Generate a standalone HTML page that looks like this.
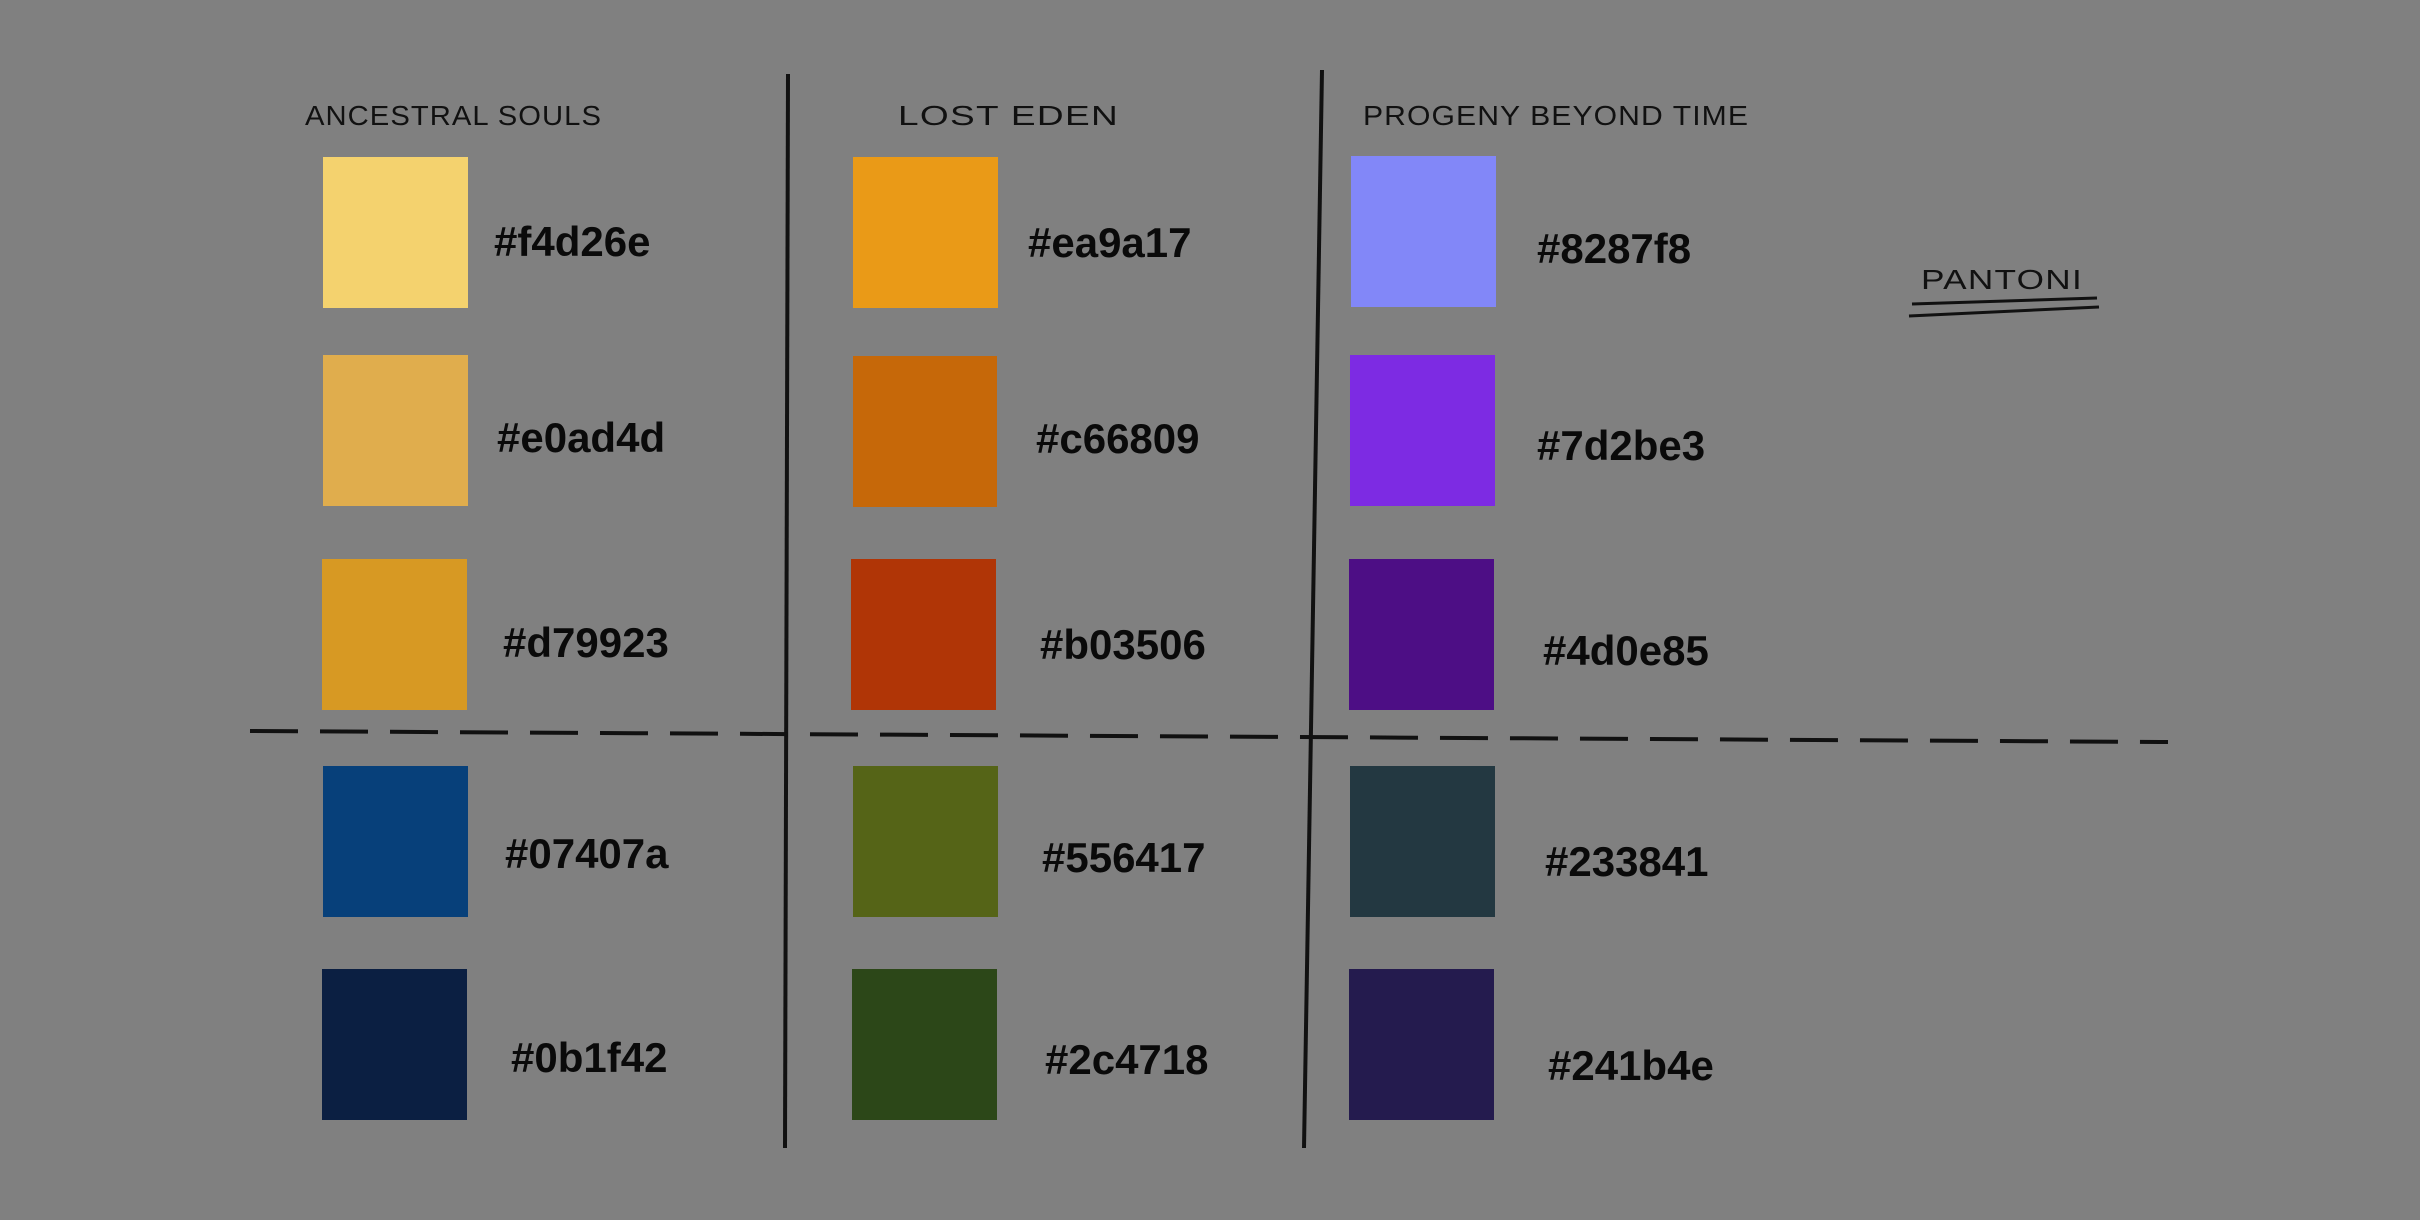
<!DOCTYPE html>
<html><head><meta charset="utf-8"><style>
html,body{margin:0;padding:0;background:#808080;}
svg{display:block}
.h{font-family:"Liberation Sans",sans-serif;font-weight:bold;font-size:42px;fill:#0a0a0a;}
.t{font-family:"Liberation Sans",sans-serif;font-size:28px;fill:#111;letter-spacing:1px;}
</style></head><body>
<svg width="2420" height="1220" viewBox="0 0 2420 1220" xmlns="http://www.w3.org/2000/svg">
<rect width="2420" height="1220" fill="#808080"/>
<text class="t" x="305" y="125" textLength="297" lengthAdjust="spacingAndGlyphs">ANCESTRAL SOULS</text>
<text class="t" x="898" y="125" textLength="221" lengthAdjust="spacingAndGlyphs">LOST EDEN</text>
<text class="t" x="1363" y="125" textLength="386" lengthAdjust="spacingAndGlyphs">PROGENY BEYOND TIME</text>
<text class="t" x="1921" y="289" font-size="54" textLength="162" lengthAdjust="spacingAndGlyphs">PANTONI</text>
<path d="M1912 304 L2097 298" stroke="#111" stroke-width="3" fill="none"/>
<path d="M1909 316 L2099 307" stroke="#111" stroke-width="3" fill="none"/>
<path d="M788 74 L785 1148" stroke="#111" stroke-width="4"/>
<path d="M1322 70 L1304 1148" stroke="#111" stroke-width="4"/>
<path d="M250 731 L2168 742" stroke="#111" stroke-width="4" stroke-dasharray="48 22"/>
<rect x="323" y="157" width="145" height="151" fill="#f4d26e"/>
<rect x="323" y="355" width="145" height="151" fill="#e0ad4d"/>
<rect x="322" y="559" width="145" height="151" fill="#d79923"/>
<rect x="323" y="766" width="145" height="151" fill="#07407a"/>
<rect x="322" y="969" width="145" height="151" fill="#0b1f42"/>
<rect x="853" y="157" width="145" height="151" fill="#ea9a17"/>
<rect x="853" y="356" width="144" height="151" fill="#c66809"/>
<rect x="851" y="559" width="145" height="151" fill="#b03506"/>
<rect x="853" y="766" width="145" height="151" fill="#556417"/>
<rect x="852" y="969" width="145" height="151" fill="#2c4718"/>
<rect x="1351" y="156" width="145" height="151" fill="#8287f8"/>
<rect x="1350" y="355" width="145" height="151" fill="#7d2be3"/>
<rect x="1349" y="559" width="145" height="151" fill="#4d0e85"/>
<rect x="1350" y="766" width="145" height="151" fill="#233841"/>
<rect x="1349" y="969" width="145" height="151" fill="#241b4e"/>
<text class="h" x="494" y="256">#f4d26e</text>
<text class="h" x="497" y="452">#e0ad4d</text>
<text class="h" x="503" y="657">#d79923</text>
<text class="h" x="505" y="868">#07407a</text>
<text class="h" x="511" y="1072">#0b1f42</text>
<text class="h" x="1028" y="257">#ea9a17</text>
<text class="h" x="1036" y="453">#c66809</text>
<text class="h" x="1040" y="659">#b03506</text>
<text class="h" x="1042" y="872">#556417</text>
<text class="h" x="1045" y="1074">#2c4718</text>
<text class="h" x="1537" y="263">#8287f8</text>
<text class="h" x="1537" y="460">#7d2be3</text>
<text class="h" x="1543" y="665">#4d0e85</text>
<text class="h" x="1545" y="876">#233841</text>
<text class="h" x="1548" y="1080">#241b4e</text>
</svg>
</body></html>
